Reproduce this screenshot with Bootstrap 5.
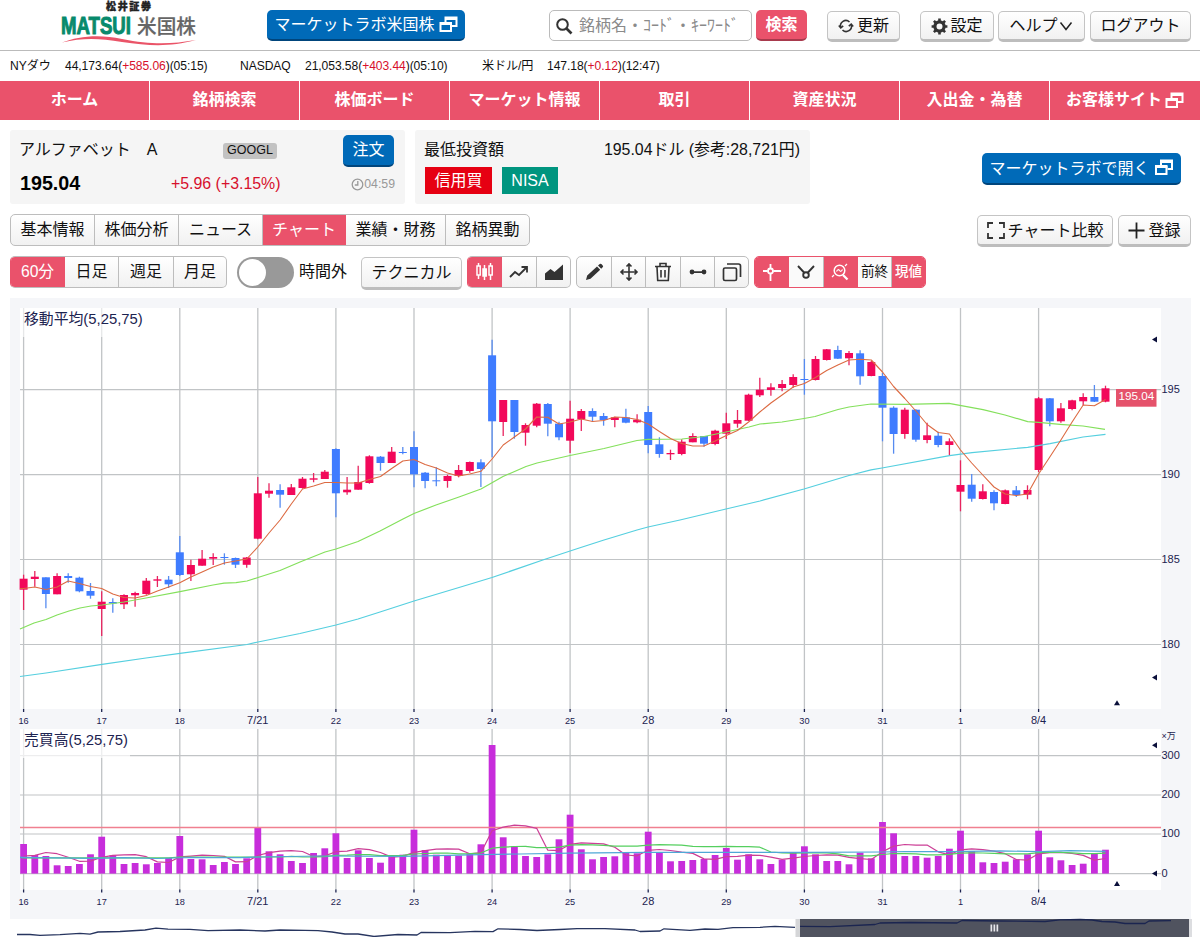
<!DOCTYPE html>
<html lang="ja">
<head>
<meta charset="utf-8">
<meta name="viewport" content="width=device-width, initial-scale=1">
<title>松井証券 米国株</title>
<link href="https://cdn.jsdelivr.net/npm/bootstrap@5.3.0/dist/css/bootstrap.min.css" rel="stylesheet">
<style>
:root{--rose:#ea526b;--blue:#006ab8;--ff:"Liberation Sans","Noto Sans CJK JP",sans-serif}
body{font-family:var(--ff);font-size:16px;line-height:1.2;color:#111;background:#fff;width:1200px;height:937px;overflow:hidden}
.topbar{height:51px;border-bottom:1px solid #bbb;padding:10px 9px 0 60px}
.topbar .logo{margin-top:-10px;width:138px;height:48px}
.b3{height:31px;padding:1px 0 0;border:1px solid #c4c4c4;border-bottom:3px solid #bdbdbd;border-radius:5px;background:linear-gradient(#fff,#f1f1f1);color:#111;font-size:16px;line-height:1;display:inline-flex;align-items:center;justify-content:center;white-space:nowrap;flex:none}
.b3.blue{background:var(--blue);border:0;border-bottom:2px solid #00457c;color:#fff}
.b3.rose{background:var(--rose);border:0;border-bottom:2px solid #a83a4d;color:#fff;font-weight:bold}
.search{width:204px;height:31px;border:1px solid #bbb;border-radius:5px;color:#8a8a8a;padding-left:5px}
.quotes{height:30px;font-size:12.1px;padding-left:10px;letter-spacing:-.07px}
.up{color:#d7102c}
.mainnav{height:39px;background:var(--rose)}
.mainnav a{width:150px;height:39px;color:#fff;font-weight:bold;text-decoration:none;border-right:1px solid #fff;padding-bottom:1px;white-space:nowrap}
.mainnav a:last-child{border:0}
.info{background:#f5f5f5;height:74px;border-radius:3px}
.tick{background:#c2c2c2;border-radius:3px;width:54px;height:16px;font-size:12.5px}
.seg{height:32px;border:1px solid #bdbdbd;border-radius:5px;overflow:hidden;background:linear-gradient(#fff,#f1f1f1);flex:none}
.seg>span{display:flex;align-items:center;justify-content:center;border-right:1px solid #bdbdbd;white-space:nowrap;height:100%;flex:none}
.seg>span:last-child{border-right:0}
.seg>.on{background:var(--rose);color:#fff;border-color:var(--rose)}
.seg.lead-on{border-left-color:var(--rose)}
.switch{width:57px;height:31px;border-radius:16px;background:#999;padding:2px}
.switch i{display:block;width:27px;height:27px;border-radius:50%;background:#fff}
.tag{height:27px;color:#fff;display:inline-flex;align-items:center;justify-content:center}
svg text{font-family:var(--ff)}
#chart{display:block;margin-top:8px}
</style>
</head>
<body>
<svg width="0" height="0" class="position-absolute"><defs>
<symbol id="win" viewBox="0 0 19 17"><path d="M6.5 6V1.5h11V10H13" fill="none" stroke="currentColor" stroke-width="2"/><path d="M6 3h12" stroke="currentColor" stroke-width="2"/><path d="M1.5 7h10.5v8H1.5z" fill="none" stroke="currentColor" stroke-width="2"/><path d="M1 8h12" stroke="currentColor" stroke-width="2"/></symbol>
</defs></svg>

<header class="topbar d-flex align-items-start">
  <svg class="logo overflow-visible" viewBox="0 0 138 48">
    <text x="46" y="10.3" font-size="10" font-weight="900" fill="#222" stroke="#222" stroke-width=".4" textLength="45">松井証券</text>
    <text x="1" y="34" font-size="24" font-weight="800" fill="#078a6c" stroke="#078a6c" stroke-width="1" textLength="70" lengthAdjust="spacingAndGlyphs">MATSUI</text>
    <text x="77" y="34" font-size="20" font-weight="500" fill="#666" stroke="#666" stroke-width=".2" textLength="59" lengthAdjust="spacingAndGlyphs">米国株</text>
    <path d="M2 42.5C18 36 40 34 62 39c30 6 50 5 74 1C110 47 90 46 62 42 38 38 22 38 2 42.5z" fill="#ea5468"/>
  </svg>
  <button class="b3 blue" style="width:198px;margin-left:69px">マーケットラボ米国株<svg class="ms-1" style="margin-top:-2px" width="19" height="17"><use href="#win"/></svg></button>
  <div class="search d-flex align-items-center" style="margin-left:84px"><svg class="me-1" width="18" height="18" viewBox="0 0 18 18" fill="none" stroke="#333" stroke-width="2"><circle cx="7.5" cy="7.5" r="5.3"/><path d="M11.5 11.5l5 5" stroke-width="2.600"/></svg><span style="margin-left:2px">銘柄名・ｺｰﾄﾞ・ｷｰﾜｰﾄﾞ</span></div>
  <button class="b3 rose" style="width:51px;margin-left:4px;padding:0">検索</button>
  <button class="b3" style="width:73px;margin:1px 0 0 20px"><svg width="16" height="16" viewBox="0 0 16 16" fill="none" stroke="#333" stroke-width="1.600"><path d="M2.800 9.500A5.300 5.300 0 0 1 11.500 4M13.200 6.500A5.300 5.300 0 0 1 4.500 12"/><path d="M.8 7.500l2 2.400 2.400-2M10.800 8.100l2.400-2 2 2.400"/></svg><span style="margin-left:3px">更新</span></button>
  <button class="b3" style="width:74px;margin:1px 0 0 20px"><svg width="17" height="17" viewBox="0 0 17 17" fill="none" stroke="#333"><circle cx="8.5" cy="8.5" r="4.6" stroke-width="3.2"/><path d="M8.5 .6v2.8M8.5 13.600v2.800M.6 8.500h2.800M13.600 8.500h2.800M2.900 2.900l2 2M12.100 12.100l2 2M2.900 14.100l2-2M12.100 4.900l2-2" stroke-width="2.600"/></svg><span style="margin-left:2px">設定</span></button>
  <button class="b3" style="width:87px;margin:1px 0 0 4px">ヘルプ<svg width="16" height="10" viewBox="0 0 16 10" fill="none" stroke="#222" stroke-width="1.500"><path d="M2.500 1.500l5.500 7 5.500-7"/></svg></button>
  <button class="b3" style="width:101px;margin:1px 0 0 5px">ログアウト</button>
</header>

<div class="quotes d-flex align-items-center">
  <span style="width:55px">NYダウ</span><span style="width:175px">44,173.64(<span class="up">+585.06</span>)(05:15)</span>
  <span style="width:65px">NASDAQ</span><span style="width:177px">21,053.58(<span class="up">+403.44</span>)(05:10)</span>
  <span style="width:65px">米ドル/円</span><span>147.18(<span class="up">+0.12</span>)(12:47)</span>
</div>

<nav class="mainnav d-flex">
  <a class="d-flex align-items-center justify-content-center">ホーム</a><a class="d-flex align-items-center justify-content-center">銘柄検索</a><a class="d-flex align-items-center justify-content-center">株価ボード</a><a class="d-flex align-items-center justify-content-center">マーケット情報</a><a class="d-flex align-items-center justify-content-center">取引</a><a class="d-flex align-items-center justify-content-center">資産状況</a><a class="d-flex align-items-center justify-content-center">入出金・為替</a><a class="d-flex align-items-center justify-content-center">お客様サイト<svg style="margin-left:3px" width="19" height="17"><use href="#win"/></svg></a>
</nav>

<section class="d-flex" style="margin:10px 19px 0 10px">
  <div class="info" style="width:395px;padding:4px 10px 0 9px">
    <div class="d-flex align-items-center" style="height:33px"><span style="width:204px;white-space:pre;padding-bottom:2px">アルファベット　A</span><span class="tick d-flex align-items-center justify-content-center">GOOGL</span><button class="b3 blue ms-auto" style="width:51px;height:32px;margin-right:1px">注文</button></div>
    <div class="d-flex align-items-center" style="height:34px"><b style="width:152px;font-size:19.700px;color:#000;padding-left:1px">195.04</b><span class="up" style="font-size:15.900px">+5.96 (+3.15%)</span><span class="ms-auto d-flex align-items-center" style="font-size:12.300px;color:#999"><svg width="13" height="13" viewBox="0 0 13 13" fill="none" stroke="#999" stroke-width="1.300"><circle cx="6.500" cy="6.500" r="5.300"/><path d="M6.800 3v4H3.800"/></svg>04:59</span></div>
  </div>
  <div class="info" style="width:395px;padding:9px 10px 0 9px;margin-left:10px">
    <div class="d-flex justify-content-between" style="height:28px;padding-top:1px"><span>最低投資額</span><span style="font-size:15.900px">195.04ドル (参考:28,721円)</span></div>
    <div class="d-flex"><span class="tag" style="width:67px;background:#e60012;margin-left:1px">信用買</span><span class="tag" style="width:56px;background:#00957f;margin-left:10px">NISA</span></div>
  </div>
  <button class="b3 blue ms-auto" style="width:199px;height:32px;margin-top:23px">マーケットラボで開く<svg style="margin:-3px 0 0 4px" width="20" height="17"><use href="#win"/></svg></button>
</section>

<section class="d-flex" style="margin:10px 9px 0 10px;height:32px">
  <div class="seg d-flex"><span style="width:84px">基本情報</span><span style="width:84px">株価分析</span><span style="width:84px">ニュース</span><span class="on" style="width:83px">チャート</span><span style="width:100px">業績・財務</span><span style="width:83px">銘柄異動</span></div>
  <button class="b3 ms-auto" style="width:136px;height:32px;margin-top:1px;padding-top:2px"><svg style="margin-top:-2px" width="18" height="17" viewBox="0 0 18 17" fill="none" stroke="#333" stroke-width="1.800"><path d="M1 6V1h5M12 1h5v5M17 11v5h-5M6 16H1v-5"/></svg><span style="margin-left:3px">チャート比較</span></button>
  <button class="b3" style="width:73px;height:32px;margin-top:1px;margin-left:5px;padding-top:2px"><svg style="margin-top:-2px" width="17" height="17" viewBox="0 0 17 17" stroke="#222" stroke-width="1.800"><path d="M8.500 .5v16M.5 8.500h16"/></svg><span style="margin-left:3px">登録</span></button>
</section>

<section class="d-flex" style="margin:10px 0 0 10px;height:32px">
  <div class="seg lead-on d-flex"><span class="on" style="width:54px;font-size:15.700px">60分</span><span style="width:54px">日足</span><span style="width:55px">週足</span><span style="width:52px">月足</span></div>
  <div class="switch" style="margin:1px 5px 0 10px"><i></i></div><span style="width:62px;padding-top:6px">時間外</span>
  <button class="b3" style="width:101px;height:33px;margin-top:1px">テクニカル</button>
  <div class="seg lead-on d-flex" style="margin-left:5px"><span class="on" style="width:34px"><svg width="19" height="20" viewBox="0 0 19 20" fill="none" stroke="#fff" stroke-width="1.500"><path d="M3.500 1v3M3.500 13v4M9.500 3v15M15.500 1v3M15.500 13v5"/><rect x="2" y="4" width="3.200" height="9"/><rect x="8" y="7" width="3.200" height="7" fill="#fff"/><rect x="14" y="4" width="3.200" height="9"/></svg></span><span style="width:35px"><svg width="20" height="16" viewBox="0 0 20 16" fill="none" stroke="#333" stroke-width="1.800"><path d="M1 13l5-5 4 3 8-8M12.500 3H18v5.500"/></svg></span><span style="width:33px"><svg width="20" height="17" viewBox="0 0 20 17" fill="#333"><path d="M1 16V9.500L6.500 5l4 3L19 .5V16z"/></svg></span></div>
  <div class="seg d-flex" style="margin-left:5px"><span style="width:35px"><svg width="19" height="18" viewBox="0 0 19 18" fill="#333"><path d="M1 17l1.200-4.500L12 3.500l3.200 3.200L5.500 15.800zM13 2.600l1.800-1.700q.8-.6 1.600.2l1.300 1.300q.8.800.2 1.600l-1.700 1.800z"/></svg></span><span style="width:34px"><svg width="20" height="20" viewBox="0 0 20 20" fill="none" stroke="#333" stroke-width="1.600"><path d="M10 2v16M2 10h16M7.500 4.500L10 2l2.500 2.500M7.500 15.500L10 18l2.500-2.500M4.500 7.500L2 10l2.500 2.500M15.500 7.500L18 10l-2.500 2.500"/></svg></span><span style="width:35px"><svg width="18" height="20" viewBox="0 0 18 20" fill="none" stroke="#333" stroke-width="1.600"><path d="M1 4.500h16M6 4V1.500h6V4M3 5l.7 13.500h10.600L15 5M7 8v7.500M11 8v7.500"/></svg></span><span style="width:34px"><svg width="18" height="6" viewBox="0 0 18 6" fill="#333"><circle cx="3" cy="3" r="2.400"/><circle cx="15" cy="3" r="2.400"/><path d="M2 2.200h14v1.700H2z"/></svg></span><span style="width:33px"><svg width="20" height="20" viewBox="0 0 20 20" fill="none" stroke="#333" stroke-width="1.700"><rect x="1.500" y="6" width="13" height="12.500" rx="1.500"/><path d="M5 2h11.500q2 0 2 2v11"/></svg></span></div>
  <div class="seg lead-on d-flex" style="margin-left:5px;border-color:var(--rose)"><span class="on" style="width:34px"><svg width="20" height="19" viewBox="0 0 20 19" fill="none" stroke="#fff" stroke-width="1.800"><circle cx="8.500" cy="8" r="2.500"/><path d="M8.500 1v4M8.500 11v7M1 8h4.700M11.300 8H19"/></svg></span><span style="width:35px;background:#fafafa"><svg width="18" height="16" viewBox="0 0 18 16" fill="none" stroke="#333" stroke-width="1.900"><path d="M1 2l6.500 7M17 2l-6.500 7"/><circle cx="9" cy="11" r="2.800"/></svg></span><span class="on" style="width:34px"><svg width="19" height="18" viewBox="0 0 19 18" fill="none" stroke="#fff" stroke-width="1.500"><circle cx="8.500" cy="7.500" r="5.300"/><path d="M12 12l4.500 4.500" stroke-width="2.300"/><path d="M5.500 8.500q1.500-3 3-1t3-1M1 14l2-2M14 3l2-2" stroke-width="1.200"/></svg></span><span style="width:34px;font-size:13.500px;background:#fafafa">前終</span><span class="on" style="width:33px;font-size:13.500px;font-weight:500">現値</span></div>
</section>

<svg id="chart" width="1200" height="641" viewBox="0 296 1200 641"></svg>

<script src="https://cdn.jsdelivr.net/npm/bootstrap@5.3.0/dist/js/bootstrap.bundle.min.js"></script>
<script>
// direction, high, body top, body bottom, low
const candles = `R 574.7 578.7 589.7 610|R 571 576.7 579 586.7|B 577.3 577.3 594 608.3|R 573.3 576 594.3 594.3|B 573.3 576 578 582.7|B 576.7 577.7 591.3 592.3|B 583 591 595.7 598.7|R 591.3 601.7 609 636|B 598.3 602 603.5 612.7|R 594.3 595 604.3 609|R 591.7 593 595.3 606.7|R 578 580.7 594 594.7|R 576 579.3 580.7 587|B 576 579.7 584.3 588
B 536 552.3 575 576|R 559.7 565 574.3 581|R 550 558.7 565.7 565.7|R 553.3 557 558.7 565|B 553.3 557 558 564.7|B 557.5 558 564.7 568|R 557 557.5 564.8 567.7|R 477 493.3 538.7 539.3|R 483.3 490.7 493.7 497.7|B 484.3 490 494.7 507.7|R 484 487.3 495 495|R 477 478.7 488 488.7|R 473 478.3 479.7 482.3|R 470 471.7 479 479
B 448.3 449 493.3 517.3|R 477 489.7 492.3 494.7|R 465.7 482 489.7 489.7|R 455.3 456.3 483 483.7|B 456 456.7 463 470.7|R 447 451.7 463 463|B 447 452 453 454.3|B 431.3 447 474.3 487.3|B 472 472.7 481 488.3|B 467.3 480.3 481.3 486.3|R 474.7 476 481 487.7|R 465 470 476 477.3|R 461.5 462 471 472.7|B 459.3 462.3 469 487
B 339.7 355.3 421.3 457.3|R 400 400 422 436|B 400 400 432 438.7|R 423.3 425 432.7 445.7|R 403 403.7 425.7 427.3|B 403 404 423.7 436.3|B 421.7 423.7 437.3 440.3|R 400.7 418.7 440.7 453|R 409 411 419.3 431|B 408.3 411 416.7 422|B 413 416 420 425.7|R 416.7 417.3 420 427.3|B 408.7 417.3 422.7 423.3|R 414.3 419.7 422.3 423.3
B 406 412 445 453.3|B 437.3 444.3 454 457.7|R 449.7 453 454.3 460|R 439.3 441.7 454 455.3|R 433.3 436 442.3 442.3|B 436 436 443.7 446.7|R 429.7 430.7 444 445.3|R 412.7 423.3 433.7 439|R 410 420 423.7 427.7|R 393.7 394.7 420.7 421|R 377.7 389.7 395.3 397|R 383.3 387.3 390 395.7|R 380 384 388 391.3|R 374.3 377 385 387.7
B 359 379 380 394.7|R 356 359 380 380.5|R 349 349.3 360 360.5|B 345.7 350 358.7 359|R 351 353 358.3 365.3|B 350.3 353.3 376.3 384.7|R 361 362 376 376.3|B 373 376 407.7 441.3|B 406.3 407.7 434 453.7|R 407.7 409.7 434 438.7|B 409.3 409.7 439.7 441.7|R 422.7 435.3 440 443.3|B 431.7 435.7 445 447.3|R 438.3 441.3 445 455.3
R 460.3 485 491.7 511.3|B 474 484.7 498.7 501.7|R 484.3 491.3 499 499.5|B 490.3 492 503.3 510.3|R 489.5 490.3 504 504.3|B 486 490.3 495 497|R 485.3 490 494.7 499.3|R 397 398.3 470 472|B 398 398.3 421.3 426.3|R 403 408.3 421.3 422.7|R 399.7 400.3 409 410.3|R 393.3 397 401.3 405.3|B 385 397 401.7 402|R 385.7 388.3 401.7 402.3`.split(/[|\n]/).map(s => s.split(' '));
const vol = [844,855,856,865.3,866,864,854.3,836.7,855.3,864,863,864.3,863,858,836,859,859.3,865,862,864,858.3,828,851.3,854.3,861,863,853,848.3,833.3,858,850.3,858,862.7,856.3,854.7,829.7,850,854.7,855.3,855.7,853.3,844.3,745,837.3,846.3,856,857,854.3,839.3,814.7,849.3,859.3,857,856.3,853,853.3,831.7,853,861.3,861,860,859,855,848,859.7,854.3,859.3,864,859.7,853,846.3,854.3,861,861,864.3,852.7,858.3,822,833.3,856,856,857.7,856,848.7,830.7,851,862.3,863,861.7,859.3,854.3,830.7,857.3,860.3,865,863.7,854,849.7];
const days = ['16','17','18','7/21','22','23','24','25','28','29','30','31','1','8/4'];
const X = i => +(23.6 + i * 11.154).toFixed(1);
const grid = '#c1c4c6', navy = '#1c2350';
let o = '';
const rect = (x, y, w, h, f, e = '') => o += `<rect x="${x}" y="${y}" width="${w}" height="${h}" fill="${f}" ${e}/>`;
const line = (x1, y1, x2, y2, s, w = 1) => o += `<path d="M${x1} ${y1}L${x2} ${y2}" stroke="${s}" stroke-width="${w}"/>`;
const poly = (p, s, w = 1.1) => o += `<polyline points="${p}" fill="none" stroke="${s}" stroke-width="${w}" stroke-linejoin="round"/>`;
const text = (x, y, t, size, anchor = 'start', fill = navy) => o += `<text x="${x}" y="${y}" font-size="${size}" text-anchor="${anchor}" fill="${fill}">${t}</text>`;
const tri = (x, y, up) => o += `<path d="${up ? `M${x} ${y - 3}l3 5h-6z` : `M${x - 3} ${y}l5-3v6z`}" fill="#0a0f3a"/>`;

rect(10, 298, 1181, 621, '#f5f6f9');
rect(20, 308, 1141, 401, '#fff');
rect(20, 729, 1141, 161, '#fff');
[389.6, 474.6, 559.5, 644.5].forEach((y, k) => { line(20, y, 1161, y, grid, 1.2); text(1161.500, y + 3.6, 195 - 5 * k, 11); });
[755.7, 795, 834, 873.6].forEach((y, k) => { line(20, y, 1161, y, grid, 1.2); text(1161.500, y + 3.300, 300 - 100 * k, 11); });
days.forEach((d, k) => {
  const x = X(k * 7), big = d.includes('/') || d === '28';
  line(x, 308, x, 709, grid, 1.300); line(x, 729, x, 890, grid, 1.300);
  line(x, 709, x, 712, navy, 1.300); line(x, 889.500, x, 892.500, navy, 1.300);
  text(x, 724, d, big ? 11 : 9.200, 'middle'); text(x, 904.500, d, big ? 11 : 9.200, 'middle');
});
rect(20, 308, 124, 29, '#fff', 'opacity=".6"');
rect(20, 729, 110, 29, '#fff', 'opacity=".7"');
text(24, 323.700, '移動平均(5,25,75)', 14.850);
text(24, 745.200, '売買高(5,25,75)', 14.850);

candles.forEach(([c, h, t, b, l], i) => {
  const up = c === 'R', x = X(i);
  line(x, h, x, l, up ? '#e8245f' : '#568bf0', 1.300);
  rect((x - 4).toFixed(1), t, 8, Math.max(b - t, 1).toFixed(1), up ? '#f2085a' : '#3f7cff');
});
const ma5 = [588.5,587,589.5,587,581,583.5,586.5,588.5,594,597.5,598,595.5,591,587,582.7,577,572,567,563,561,559,547,533,520,504,489,486,482.5,482.5,483,483,479.5,476.5,468.5,461,459.5,464.5,468,473,476,474,471.3,459,445,437,429,417,417.3,424,422,419,421.5,420.5,417,417.5,419.5,424,431.5,438.5,443.5,446,446,441,435.5,430.5,422,412,403,395,387,383.5,377.5,370.5,365,360,359.3,360,372,386.5,398.5,411,424.5,432.5,434,450,463,475,487,494,495.5,494,474,457,440,422,405,405.8,399.5];
poly('20,676.5 46,673 102,664.3 146,658 180,653.3 247,644.5 258,642 300,633.5 336,625 358,619 380,612 414,601 459,587.5 492,577.5 545,559.3 580,547.7 604,540 637,530 648,527 680,520 726,509 760,501 804,489 849,475.5 871,469.8 882,468 949.5,455.7 972,452.7 1027.7,447.3 1050,443.7 1083,437 1105.5,434.3', '#55cfdf', 1.200);
poly('20,629 34,623 46,619.5 57,615 69,611 80,608 91,606 102,605 124,602 146,598 180,591.7 213,585 224,583.2 236,582.7 247,581 258,577.5 280,570.5 300,562 325,552 336,549 358,541.5 380,531 403,519 414,513.5 436,505 459,497 481,489 503,476.5 526,466.5 537,463 570,455.5 604,448.5 637,440.5 648,439.3 682,439 704,436.5 726,432 749,427 760,424 782,422 804,418.5 815,416.5 838,409.5 849,407 871,404 905,404.3 949,403.3 983,409.7 1005,415 1027.7,421.7 1038.7,422.3 1060,424.3 1083,426 1105,429.3', '#84e05c', 1.200);
poly(['20,588.5', ...ma5.map((y, i) => X(i) + ',' + y)].join(' '), '#dc6a42', 1.100);

vol.forEach((y, i) => rect((X(i) - 3.4).toFixed(1), y, 6.8, (873.6 - y).toFixed(1), '#c72ddb'));
line(20, 827.500, 1161, 827.500, '#f08090', 1.300);
const avg = (i, n) => (vol.slice(i - n + 1, i + 1).reduce((a, b) => a + b, 0) / n).toFixed(1);
poly(vol.map((_, i) => X(i) + ',' + (i < 4 ? [856, 855.3, 852.5, 853.7][i] : avg(i, 5))).join(' '), '#cc3f96', 1.200);
poly('20,857.3 ' + vol.map((_, i) => X(i) + ',' + (i < 24 ? (i > 13 ? 857 : 857.8) : avg(i, 25))).join(' '), '#55cf5f', 1.200);
poly('20,857.3 90,858.3 124,857.7 157,858.5 190,857.5 240,857.7 258,857 320,856 403,856.3 480,854.7 520,854 570,853.2 648,852.4 804,852.4 882,852 905,851.5 950,851.7 1000,850.9 1040,851.7 1070,850.7 1105.5,851.3', '#4fa8d6', 1.200);

tri(1155, 339.500); tri(1155, 677.500); tri(1155, 745.300); tri(1155, 873.600);
tri(1117, 703.300, 1); tri(1117, 884, 1);
rect(1116, 389, 40.500, 17.700, '#e5526b');
text(1136.300, 400, '195.04', 11.700, 'middle', '#fff');
text(1161.500, 739, '×万', 9);

// range navigator
rect(0, 919, 1200, 18, '#fff');
rect(800, 919, 389, 18, '#50535f');
rect(795.500, 919, 4.500, 18, '#d5d6d8');
rect(1189, 919, 3, 18, '#dcdde0');
poly('17,934.5 30,934.5 40,935.3 60,934.7 80,933.3 90,934.2 98,932 120,931.5 145,930 156,928.2 168,929.2 190,929.3 208,930.7 240,930 265,931 280,930 305,930.3 318,930.7 332,932 345,934 358,934 374,936.5 398,934.500 417,935 421,932.500 450,932.600 475,931.300 493,931.600 498,928.800 520,929.500 537,930.500 560,929.500 577,928.600 605,928.700 635,930 640,931.500 660,931 664,928.800 690,930.300 705,929 718,929.300 733,927.700 760,927.300 775,926.300 795,927.300', '#27355f', 1.300);
poly('800,926.300 830,926.600 875,924.500 880,923 910,922.500 957,923 962,920.500 1000,921 1045,921.500 1060,919.800 1080,919.500 1092,920 1102,921.500 1115,922 1125,923.500 1145,923.500 1149,921 1171,920.700', '#1b2550', 1.300);
[990.500, 993.500, 996.500].forEach(x => rect(x, 924.500, 1.700, 7, '#e8e8ec'));
document.getElementById('chart').innerHTML = o;
</script>
</body>
</html>
